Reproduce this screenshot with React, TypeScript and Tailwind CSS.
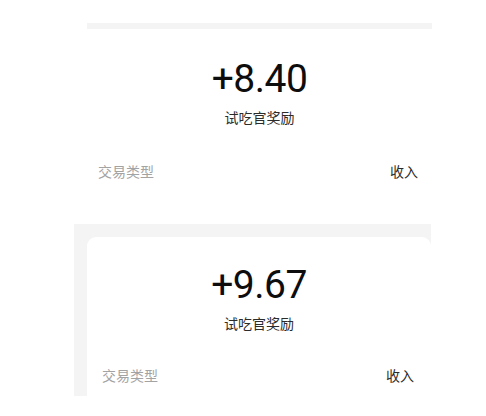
// App.tsx — two stacked transaction detail cards (cropped screenshots)

import React from 'react'

type Tx = {
  amount: string
  title:  string
  kind:   string
}

const first:  Tx = { amount: '+8.40', title: '试吃官奖励', kind: '收入' }
const second: Tx = { amount: '+9.67', title: '试吃官奖励', kind: '收入' }

const cjk = "font-['Noto_Sans_CJK_SC','Noto_Sans',sans-serif]"
const num = "font-['Roboto','Noto_Sans',sans-serif]"

export default function App() {
  return (
    <div className="w-[486px] h-[416px] bg-white overflow-hidden">
      {/* --- Top card: thin grey strip then white card --- */}
      <div className="ml-[87px] pt-[23px] w-[345px] h-[224px] flex flex-col">
        <div className="h-[6px] bg-[#f4f4f4]" />
        <div className="bg-white rounded-t-[8px] flex flex-col items-center pt-[30px]">
          <div className={`${num} text-[39px] leading-[40px] font-normal tracking-[-0.5px] text-[#0d0d0d]`}>
            {first.amount}
          </div>
          <div className={`${cjk} mt-[8px] text-[14px] leading-[20px] text-[#2b2b2b]`}>
            {first.title}
          </div>
          <div className={`${cjk} mt-[34px] w-full flex items-center justify-between pl-[11px] pr-[14px] text-[14px] leading-[20px]`}>
            <span className="text-[#a3a3a3]">交易类型</span>
            <span className="text-[#2b2b2b]">{first.kind}</span>
          </div>
        </div>
      </div>

      {/* --- Bottom card: grey frame with white card inset --- */}
      <div className="ml-[74px] w-[357px] h-[172px] bg-[#f4f4f4] pl-[13px] pt-[13px] flex flex-col">
        <div className="flex-1 bg-white rounded-t-[9px] flex flex-col items-center pt-[28px]">
          <div className={`${num} text-[39px] leading-[40px] font-normal tracking-[-0.5px] text-[#0d0d0d]`}>
            {second.amount}
          </div>
          <div className={`${cjk} mt-[8px] text-[14px] leading-[20px] text-[#2b2b2b]`}>
            {second.title}
          </div>
          <div className={`${cjk} mt-[32px] w-full flex items-center justify-between pl-[15px] pr-[17px] text-[14px] leading-[20px]`}>
            <span className="text-[#a3a3a3]">交易类型</span>
            <span className="text-[#2b2b2b]">{second.kind}</span>
          </div>
        </div>
      </div>
    </div>
  )
}
